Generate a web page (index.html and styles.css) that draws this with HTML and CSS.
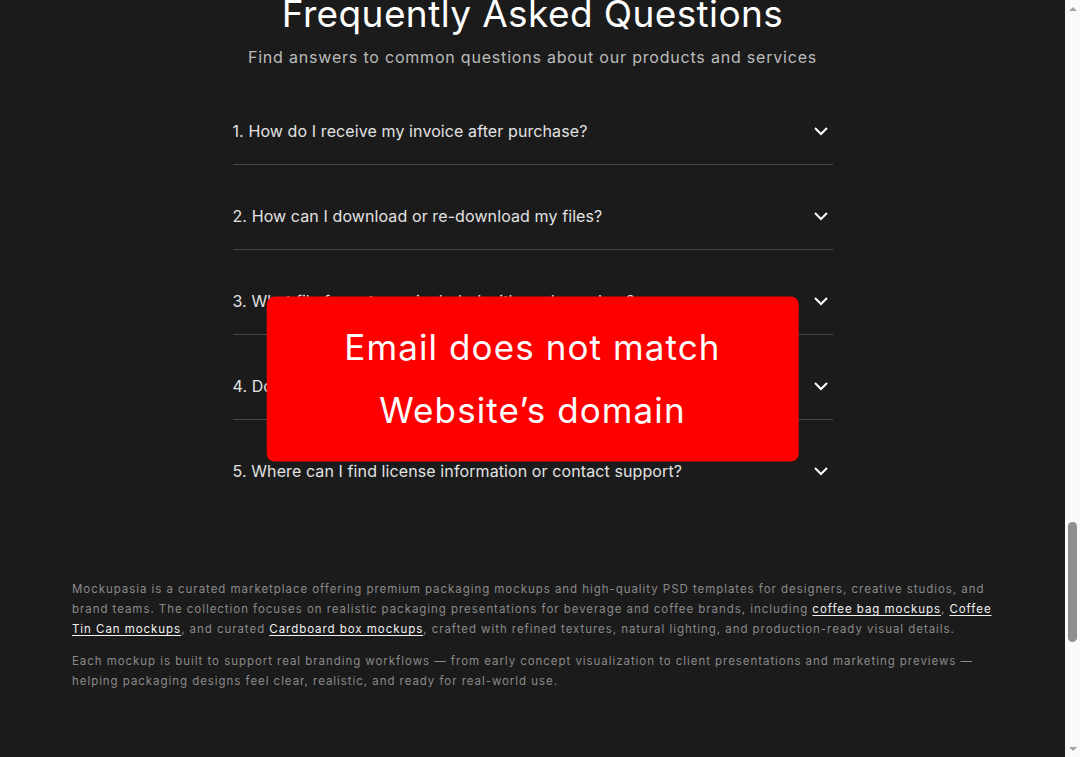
FILE: index.html
```html
<!DOCTYPE html>
<html lang="en">
<head>
  <meta charset="UTF-8">
  <meta name="viewport" content="width=device-width, initial-scale=1.0">
  <title>FAQ - Mockupasia</title>
  <link rel="stylesheet" href="styles.css">
</head>
<body>
  <main class="page">
    <section class="faq">
      <h1 class="faq-title">Frequently Asked Questions</h1>
      <p class="faq-subtitle">Find answers to common questions about our products and services</p>

      <div class="faq-list">
        <div class="faq-item">
          <button class="faq-question">
            <span>1. How do I receive my invoice after purchase?</span>
            <svg class="chevron" viewBox="0 0 16 10"><path d="M2 2l6 6 6-6"/></svg>
          </button>
        </div>
        <div class="faq-item">
          <button class="faq-question">
            <span>2. How can I download or re-download my files?</span>
            <svg class="chevron" viewBox="0 0 16 10"><path d="M2 2l6 6 6-6"/></svg>
          </button>
        </div>
        <div class="faq-item">
          <button class="faq-question">
            <span>3. What file formats are included with each mockup?</span>
            <svg class="chevron" viewBox="0 0 16 10"><path d="M2 2l6 6 6-6"/></svg>
          </button>
        </div>
        <div class="faq-item">
          <button class="faq-question">
            <span>4. Do I need Photoshop to use these mockups?</span>
            <svg class="chevron" viewBox="0 0 16 10"><path d="M2 2l6 6 6-6"/></svg>
          </button>
        </div>
        <div class="faq-item">
          <button class="faq-question">
            <span>5. Where can I find license information or contact support?</span>
            <svg class="chevron" viewBox="0 0 16 10"><path d="M2 2l6 6 6-6"/></svg>
          </button>
        </div>
      </div>
    </section>

    <footer class="about">
      <p>Mockupasia is a curated marketplace offering premium packaging mockups and high-quality PSD templates for designers, creative studios, and brand teams. The collection focuses on realistic packaging presentations for beverage and coffee brands, including <a href="#">coffee bag mockups</a>, <a href="#">Coffee Tin Can mockups</a>, and curated <a href="#">Cardboard box mockups</a>, crafted with refined textures, natural lighting, and production-ready visual details.</p>
      <p>Each mockup is built to support real branding workflows — from early concept visualization to client presentations and marketing previews — helping packaging designs feel clear, realistic, and ready for real-world use.</p>
    </footer>

    <div class="toast">Email does not match<br>Website’s domain</div>
  </main>

  <!-- scrollbar strip -->
  <aside class="scrollbar">
    <span class="arrow up"></span>
    <div class="track"><div class="thumb"></div></div>
    <span class="arrow down"></span>
  </aside>
</body>
</html>
```

FILE: styles.css
```css
* {
  box-sizing: border-box;
}
html, body {
  margin: 0;
  height: 100%;
}
body {
  display: flex;
  overflow: hidden;
  background-color: #1b1b1b;
  font-family: Inter, "Noto Sans", sans-serif;
  color: #e6e6e6;
}
.page {
  position: relative;
  flex: 1;
  display: flex;
  flex-direction: column;
}

/* FAQ */
.faq {
  display: flex;
  flex-direction: column;
  align-items: center;
}
.faq-title {
  margin: -8px 0 0;
  font-size: 37px;
  line-height: 44px;
  font-weight: 400;
  letter-spacing: 0.4px;
  color: #fff;
}
.faq-subtitle {
  margin: 9px 0 0;
  font-size: 16px;
  line-height: 24px;
  letter-spacing: 0.05em;
  color: #bcbcbc;
}
.faq-list {
  width: 600px;
  margin-top: 11px;
}
.faq-item {
  border-bottom: 1px solid #474747;
}
.faq-item:last-child {
  border-bottom: none;
}
.faq-question {
  display: flex;
  width: 100%;
  align-items: center;
  justify-content: space-between;
  padding: 39px 0 21px;
  border: 0;
  background: none;
  font-family: inherit;
  font-size: 16px;
  line-height: 24px;
  letter-spacing: 0.1px;
  color: #e2e2e2;
  text-align: left;
  cursor: pointer;
}
.chevron {
  width: 16px;
  height: 10px;
  margin-right: 4px;
  fill: none;
  stroke: #fff;
  stroke-width: 2;
}

/* footer copy */
.about {
  margin-top: 75px;
  padding: 0 72px;
}
.about p {
  margin: 0 0 12px;
  font-size: 11.5px;
  line-height: 20px;
  letter-spacing: 0.95px;
  color: #8a8a8a;
}
.about a {
  color: #f2f2f2;
  text-decoration: underline;
  text-underline-offset: 2px;
}

/* error toast */
.toast {
  position: absolute;
  top: 50%;
  left: 50%;
  transform: translate(-50%, -50%);
  width: 50%;
  padding: 19px 0 20px;
  border-radius: 8px;
  background-color: #ff0000;
  color: #fff;
  font-size: 35px;
  line-height: 63px;
  letter-spacing: 1.1px;
  text-align: center;
}

/* scrollbar */
.scrollbar {
  display: flex;
  flex-direction: column;
  width: 15px;
  height: 100%;
  background-color: #fafafa;
}
.arrow {
  height: 17px;
  display: flex;
  align-items: center;
  justify-content: center;
}
.arrow::before {
  content: "";
  border-left: 4px solid transparent;
  border-right: 4px solid transparent;
}
.arrow.up::before {
  border-bottom: 4px solid #a3a3a3;
}
.arrow.down::before {
  border-top: 4px solid #a3a3a3;
}
.track {
  flex: 1;
  display: flex;
  justify-content: center;
}
.thumb {
  width: 9px;
  height: 120px;
  margin-top: 505px;
  border-radius: 5px;
  background-color: #8f8f8f;
}
```
